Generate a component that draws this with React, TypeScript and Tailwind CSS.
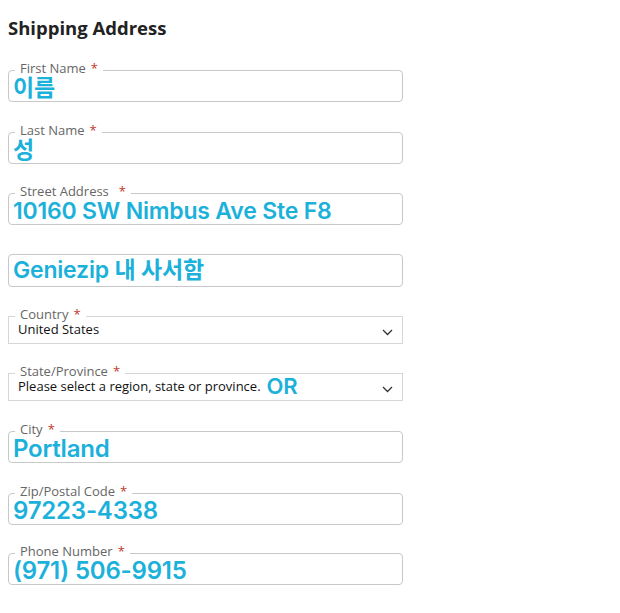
const blue = "text-[#1bb1da] font-['Inter','Noto_Sans_CJK_KR',sans-serif] font-semibold tracking-[-0.2px]";

function Legend({ label, gap = false }: { label: string; gap?: boolean }) {
  return (
    <legend className="ml-[6px] px-[5px] pb-[4px] text-[13px] leading-[16px] text-[#666] font-['Open_Sans',sans-serif]">
      {label}
      <span className={gap ? "ml-[10px] text-[#c0392b]" : "ml-[5px] text-[#c0392b]"}>*</span>
    </legend>
  );
}

function TextField({ label, value, gap, mt, size = "text-[23px]" }: { label: string; value: string; gap?: boolean; mt: string; size?: string }) {
  return (
    <fieldset className={`${mt} h-[42px] rounded-[4px] border border-[#c8c8c8] p-0 min-w-0`}>
      <Legend label={label} gap={gap} />
      <div className={`${blue} ${size} -mt-[3px] pl-[4px] leading-[22px] whitespace-nowrap`}>{value}</div>
    </fieldset>
  );
}

function SelectField({ label, value, extra, mt }: { label: string; value: string; extra?: string; mt: string }) {
  return (
    <fieldset className={`${mt} h-[38px] border border-[#d6d6d6] p-0 min-w-0`}>
      <Legend label={label} />
      <div className="-mt-[6px] flex h-[19px] items-center justify-between pl-[9px] pr-[9px]">
        <div className="flex items-center gap-[6px]">
          <span className="text-[13px] text-[#111] font-['Open_Sans',sans-serif]">{value}</span>
          {extra && <span className={`${blue} text-[22px] leading-[19px] font-bold`}>{extra}</span>}
        </div>
        <svg width="11" height="7" viewBox="0 0 11 7" fill="none" className="mt-[5px]">
          <path d="M1 1l4.5 4.5L10 1" stroke="#333" strokeWidth="1.3" />
        </svg>
      </div>
    </fieldset>
  );
}

export default function App() {
  return (
    <div className="w-[620px] h-[613px] bg-white px-[8px] pt-[16px]">
      <h2 className="text-[18.5px] leading-[24px] font-bold text-[#222] font-['Open_Sans',sans-serif]">Shipping Address</h2>
      <div className="flex w-[395px] flex-col">
        <TextField mt="mt-[20px]" label="First Name" value="이름" />
        <TextField mt="mt-[20px]" label="Last Name" value="성" />
        <TextField mt="mt-[19px]" label="Street Address" value="10160 SW Nimbus Ave Ste F8" gap />
        <div className="mt-[29px] h-[33px] rounded-[4px] border border-[#c8c8c8] pl-[4px]">
          <div className={`${blue} mt-[3px] text-[23px] leading-[24px]`}>Geniezip 내 사서함</div>
        </div>
        <SelectField mt="mt-[19px]" label="Country" value="United States" />
        <SelectField mt="mt-[19px]" label="State/Province" value="Please select a region, state or province." extra="OR" />
        <TextField mt="mt-[20px]" label="City" value="Portland" size="text-[24px]" />
        <TextField mt="mt-[20px]" label="Zip/Postal Code" value="97223-4338" size="text-[24px]" />
        <TextField mt="mt-[18px]" label="Phone Number" value="(971) 506-9915" size="text-[24px]" />
      </div>
    </div>
  );
}
